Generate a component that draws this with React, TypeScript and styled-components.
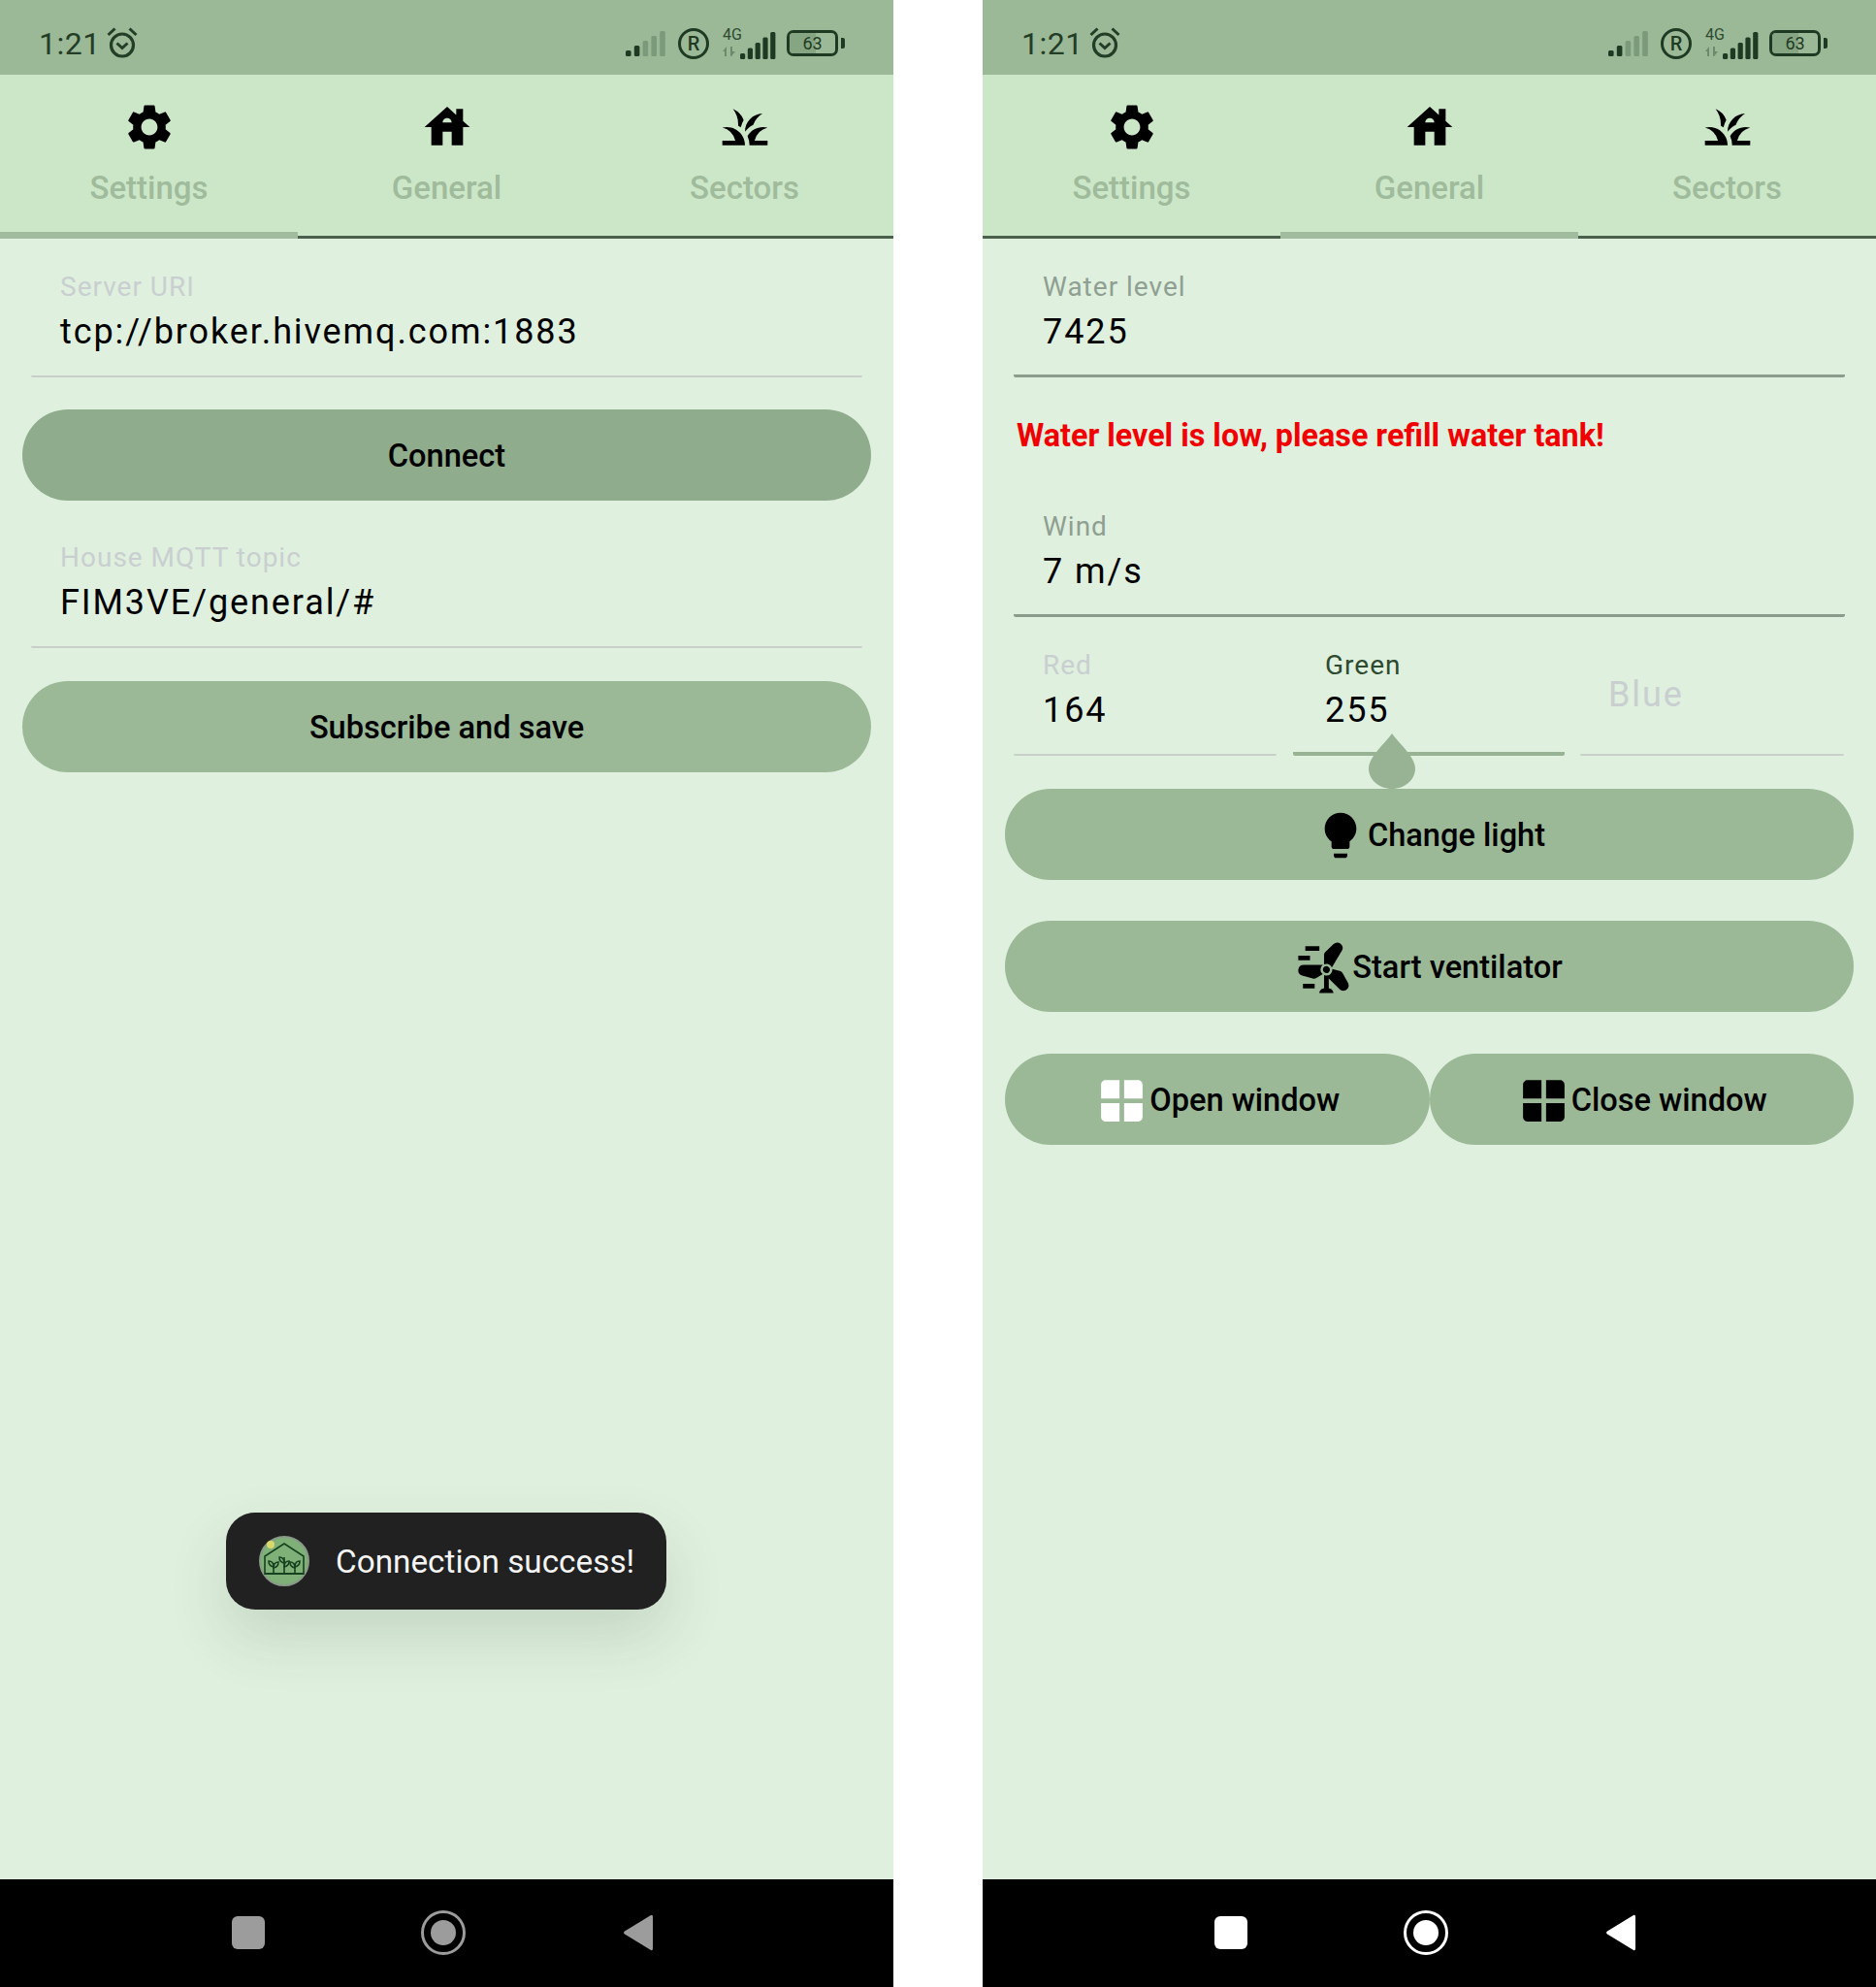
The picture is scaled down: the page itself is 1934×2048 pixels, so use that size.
import styled, { createGlobalStyle } from 'styled-components';
import { MdHouse, MdGrass, MdLightbulb, MdSettings, MdWindPower, MdWindow } from 'react-icons/md';

const GlobalStyle = createGlobalStyle`
  html, body {
    margin: 0;
    padding: 0;
    background: #ffffff;
  }
  * {
    box-sizing: border-box;
  }
`;

const Page = styled.div`
  width: 1934px;
  height: 2048px;
  display: flex;
  gap: 92px;
  font-family: Roboto, 'Noto Sans', sans-serif;
`;

const Phone = styled.div`
  position: relative;
  width: 921px;
  height: 2048px;
  display: flex;
  flex-direction: column;
  background: #dff0de;
  overflow: hidden;
`;

const StatusBar = styled.div`
  height: 77px;
  background: #9bb997;
  display: flex;
  align-items: center;
  justify-content: space-between;
  padding: 24px 50px 12px 40px;
  color: #1f3a22;
`;

const StatusGroup = styled.div`
  display: flex;
  align-items: center;
`;

const Time = styled.span`
  font-size: 32px;
  letter-spacing: 0.5px;
  margin-right: 5px;
  color: #233d26;
`;

const RegBadge = styled.span`
  width: 32px;
  height: 32px;
  margin: 0 14px 0 12px;
  border: 3px solid #1f3a22;
  border-radius: 50%;
  display: flex;
  align-items: center;
  justify-content: center;
  font-size: 20px;
  font-weight: 500;
`;

const NetworkBlock = styled.span`
  position: relative;
  width: 56px;
  height: 32px;
  margin-right: 10px;
`;

const NetworkLabel = styled.span`
  position: absolute;
  left: 0;
  top: -3px;
  font-size: 16px;
  color: #2c4a30;
`;

const BatteryBody = styled.span`
  position: relative;
  width: 53px;
  height: 27px;
  border: 3px solid #1f3a22;
  border-radius: 7px;
  display: flex;
  align-items: center;
  justify-content: center;
  font-size: 18px;
  color: #1f3a22;
  overflow: hidden;
`;

const BatteryFill = styled.span`
  position: absolute;
  left: 0;
  top: 0;
  bottom: 0;
  width: 58%;
  background: #86a583;
`;

const BatteryText = styled.span`
  position: relative;
`;

const BatteryTip = styled.span`
  width: 4px;
  height: 11px;
  margin-left: 3px;
  background: #1f3a22;
  border-radius: 0 2px 2px 0;
`;

const TabBar = styled.div`
  height: 169px;
  background: #cbe7c8;
  display: grid;
  grid-template-columns: repeat(3, 1fr);
`;

const Tab = styled.div<{ $active?: boolean }>`
  display: flex;
  flex-direction: column;
  align-items: center;
  padding-top: 26px;
  border-bottom: ${({ $active }) =>
    $active ? '7px solid #a0bb9d' : '3px solid #4b604c'};
  color: #000;

  svg {
    width: 56px;
    height: 56px;
    display: block;
  }
`;

const TabLabel = styled.span`
  margin-top: 15px;
  font-size: 33px;
  line-height: 40px;
  font-weight: 500;
  color: #9fbb9b;
`;

const Content = styled.div`
  flex: 1;
  display: flex;
  flex-direction: column;
  padding: 21px 23px 0;
`;

const Field = styled.div`
  position: relative;
  flex: none;
  height: 122px;
  padding: 11px 38px 0 30px;
  margin: 0 9px;
  border-bottom: 2px solid #c8cec8;
  border-radius: 0 0 2px 2px;
`;

const TopicField = styled(Field)`
  height: 121px;
  margin-top: 31px;
  padding-top: 10px;
`;

const DarkField = styled(Field)`
  border-bottom: 3px solid #8c9c8c;
`;

const FieldLabel = styled.div<{ $tone?: string }>`
  font-size: 28px;
  line-height: 36px;
  letter-spacing: 1px;
  color: ${({ $tone }) => $tone || '#c9cfd0'};
`;

const FieldValue = styled.div`
  margin-top: 3px;
  font-size: 36px;
  line-height: 50px;
  letter-spacing: 1.9px;
  color: #000;
`;

const Placeholder = styled.div`
  margin-top: 23px;
  font-size: 36px;
  line-height: 50px;
  letter-spacing: 1.9px;
  color: #c9cfd0;
`;

const Button = styled.div<{ $dark?: boolean }>`
  height: 94px;
  flex: 1;
  padding-top: 2px;
  display: flex;
  align-items: center;
  justify-content: center;
  border-radius: 47px;
  background: ${({ $dark }) => ($dark ? '#8fac8d' : '#9bb997')};
  color: #000;
  font-size: 32.6px;
  font-weight: 500;
`;

const ButtonRow = styled.div<{ $top: number }>`
  display: flex;
  margin-top: ${({ $top }) => $top}px;
`;

const WaterWarning = styled.div`
  margin: 38px 0 0 12px;
  height: 87px;
  font-size: 32.3px;
  line-height: 44px;
  font-weight: 700;
  color: #f00000;
`;

const RgbRow = styled.div`
  display: flex;
  height: 143px;
`;

const RedField = styled(Field)`
  width: 271px;
  height: 143px;
  margin: 0 17px 0 9px;
  padding: 32px 0 0 30px;
`;

const GreenField = styled(Field)`
  width: 280px;
  height: 143px;
  margin: 0;
  padding: 32px 0 0 33px;
  border-bottom: 4px solid #97b394;
`;

const BlueField = styled(Field)`
  width: 272px;
  height: 143px;
  margin: 0 9px 0 16px;
  padding: 32px 0 0 29px;
`;

const SliderThumb = styled.svg`
  position: absolute;
  left: 77px;
  bottom: -38px;
  width: 50px;
  height: 57px;
`;

const Toast = styled.div`
  position: absolute;
  left: 233px;
  top: 1559px;
  width: 454px;
  height: 100px;
  padding-left: 34px;
  display: flex;
  align-items: center;
  gap: 27px;
  border-radius: 30px;
  background: #212121;
  color: #f4f4f4;
  font-size: 33.3px;
  box-shadow: 0 28px 60px rgba(60, 90, 60, 0.16);

  svg {
    flex: none;
  }
`;

const NavBar = styled.div`
  height: 111px;
  padding-right: 7px;
  background: #000;
  display: grid;
  grid-template-columns: repeat(3, 201px);
  justify-content: center;
  align-items: center;
`;

const NavCell = styled.div`
  display: flex;
  justify-content: center;
  padding-bottom: 1px;
`;

const NavSquare = styled.div<{ $color: string }>`
  width: 34px;
  height: 34px;
  border-radius: 6px;
  background: ${({ $color }) => $color};
`;

const NavCircle = styled.div<{ $color: string }>`
  width: 46px;
  height: 46px;
  padding: 7px;
  border: 3px solid ${({ $color }) => $color};
  border-radius: 50%;

  &::after {
    content: '';
    display: block;
    width: 100%;
    height: 100%;
    border-radius: 50%;
    background: ${({ $color }) => $color};
  }
`;

const NavBack = ({ color }: { color: string }) => (
  <svg width="32" height="40" viewBox="0 0 32 40">
    <path
      d="M29 2 Q31 1 31 4 V36 Q31 39 29 38 L2 21.5 Q0 20 2 18.5 Z"
      fill={color}
    />
  </svg>
);

const AlarmIcon = () => (
  <svg width="34" height="34" viewBox="0 0 34 34" fill="none" stroke="#233d26">
    <circle cx="17" cy="18.5" r="11.5" strokeWidth="3.2" />
    <path d="M11.5 16.5 17 21.5 22.5 16.5" strokeWidth="3" />
    <path d="M9.5 1.5 2.5 8" strokeWidth="3" />
    <path d="M24.5 1.5 31.5 8" strokeWidth="3" />
  </svg>
);

const SignalBars = ({ lit, width = 42 }: { lit: number; width?: number }) => (
  <svg width={width} height="27" viewBox="0 0 42 27">
    {[0, 1, 2, 3, 4].map((i) => (
      <rect
        key={i}
        x={i * 8.8}
        y={21 - i * 5}
        width="5.6"
        height={6 + i * 5}
        rx="1.5"
        fill={i < lit ? '#1f3a22' : '#7b9a79'}
      />
    ))}
  </svg>
);

const SmallArrows = styled.svg`
  position: absolute;
  left: 0;
  bottom: 2px;
`;

const StatusContent = () => (
  <StatusBar>
    <StatusGroup>
      <Time>1:21</Time>
      <AlarmIcon />
    </StatusGroup>
    <StatusGroup>
      <SignalBars lit={2} />
      <RegBadge>R</RegBadge>
      <NetworkBlock>
        <NetworkLabel>4G</NetworkLabel>
        <SmallArrows width="14" height="12" viewBox="0 0 14 12" fill="#6d8a6c">
          <path d="M0 6 4 1 V11 H2 V6 Z" />
          <path d="M8 1 H10 V6 H13 L9 11 H8 Z" />
        </SmallArrows>
        <svg width="56" height="32" viewBox="0 0 56 32">
          {[0, 1, 2, 3, 4].map((i) => (
            <rect
              key={i}
              x={18 + i * 7.8}
              y={26 - i * 5.5}
              width="5.2"
              height={6 + i * 5.5}
              rx="1.5"
              fill="#1f3a22"
            />
          ))}
        </svg>
      </NetworkBlock>
      <BatteryBody>
        <BatteryFill />
        <BatteryText>63</BatteryText>
      </BatteryBody>
      <BatteryTip />
    </StatusGroup>
  </StatusBar>
);

const Tabs = ({ active }: { active: number }) => (
  <TabBar>
    <Tab $active={active === 0}>
      <MdSettings />
      <TabLabel>Settings</TabLabel>
    </Tab>
    <Tab $active={active === 1}>
      <MdHouse />
      <TabLabel>General</TabLabel>
    </Tab>
    <Tab $active={active === 2}>
      <MdGrass />
      <TabLabel>Sectors</TabLabel>
    </Tab>
  </TabBar>
);

const Nav = ({ color }: { color: string }) => (
  <NavBar>
    <NavCell>
      <NavSquare $color={color} />
    </NavCell>
    <NavCell>
      <NavCircle $color={color} />
    </NavCell>
    <NavCell>
      <NavBack color={color} />
    </NavCell>
  </NavBar>
);

const ToastLogo = () => (
  <svg width="52" height="52" viewBox="0 0 52 52">
    <circle cx="26" cy="26" r="25" fill="#7fb078" stroke="#8a9a88" strokeWidth="2" />
    <circle cx="12" cy="9" r="4" fill="#d9d86a" />
    <g fill="none" stroke="#17421f" strokeWidth="1.6">
      <path d="M6 40 V21 L26 8 L46 21 V40" />
      <path d="M6 39 H46" strokeWidth="2.2" />
      <path d="M15 38 V28 M26 38 V22 M37 38 V28" />
      <path d="M15 32 Q10 31 10 26 Q15 26 15 32 Z" />
      <path d="M15 33 Q20 32 20 27 Q15 27 15 33 Z" />
      <path d="M26 28 Q21 27 21 22 Q26 22 26 28 Z" />
      <path d="M26 32 Q31 31 31 26 Q26 26 26 32 Z" />
      <path d="M37 33 Q32 32 32 27 Q37 27 37 33 Z" />
      <path d="M37 32 Q42 31 42 26 Q37 26 37 32 Z" />
    </g>
  </svg>
);

export default function App() {
  return (
    <>
      <GlobalStyle />
      <Page>
        <Phone>
          <StatusContent />
          <Tabs active={0} />
          <Content>
            <Field>
              <FieldLabel>Server URI</FieldLabel>
              <FieldValue>tcp://broker.hivemq.com:1883</FieldValue>
            </Field>
            <ButtonRow $top={33}>
              <Button $dark>Connect</Button>
            </ButtonRow>
            <TopicField>
              <FieldLabel>House MQTT topic</FieldLabel>
              <FieldValue>FIM3VE/general/#</FieldValue>
            </TopicField>
            <ButtonRow $top={34}>
              <Button>Subscribe and save</Button>
            </ButtonRow>
          </Content>
          <Toast>
            <ToastLogo />
            Connection success!
          </Toast>
          <Nav color="#9c9c9c" />
        </Phone>
        <Phone>
          <StatusContent />
          <Tabs active={1} />
          <Content>
            <DarkField>
              <FieldLabel $tone="#8f9f92">Water level</FieldLabel>
              <FieldValue>7425</FieldValue>
            </DarkField>
            <WaterWarning>Water level is low, please refill water tank!</WaterWarning>
            <DarkField>
              <FieldLabel $tone="#8f9f92">Wind</FieldLabel>
              <FieldValue>7 m/s</FieldValue>
            </DarkField>
            <RgbRow>
              <RedField>
                <FieldLabel>Red</FieldLabel>
                <FieldValue>164</FieldValue>
              </RedField>
              <GreenField>
                <FieldLabel $tone="#2d4a30">Green</FieldLabel>
                <FieldValue>255</FieldValue>
                <SliderThumb viewBox="0 0 50 57">
                  <path d="M25 0 C31 9 49 24 49 36 C49 48 38 57 25 57 C12 57 1 48 1 36 C1 24 19 9 25 0 Z" fill="#97b394" />
                </SliderThumb>
              </GreenField>
              <BlueField>
                <Placeholder>Blue</Placeholder>
              </BlueField>
            </RgbRow>
            <ButtonRow $top={34}>
              <Button>
                <MdLightbulb size={56} />
                Change light
              </Button>
            </ButtonRow>
            <ButtonRow $top={42}>
              <Button>
                <MdWindPower size={58} />
                Start ventilator
              </Button>
            </ButtonRow>
            <ButtonRow $top={43}>
              <Button>
                <MdWindow size={57} color="#ffffff" />
                Open window
              </Button>
              <Button>
                <MdWindow size={57} />
                Close window
              </Button>
            </ButtonRow>
          </Content>
          <Nav color="#ffffff" />
        </Phone>
      </Page>
    </>
  );
}
